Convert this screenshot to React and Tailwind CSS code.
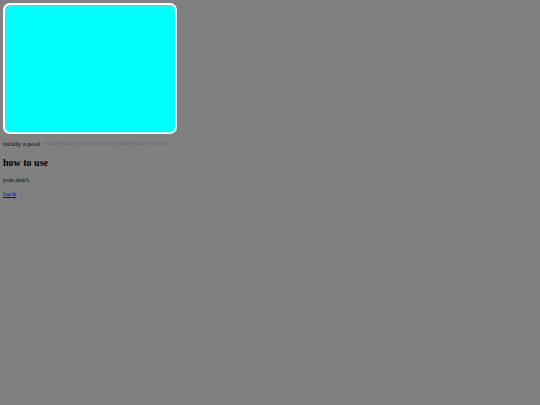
export default function App() {
  return (
    <div className="min-h-[405px] bg-[#808080] p-[3px] text-[7px] leading-[1.15] text-black font-['Liberation_Serif',serif]">
      <div className="w-[174px] h-[131px] rounded-[7px] border-[2px] border-white bg-[#00ffff]" />
      <p className="mt-[6px]">
        totally a pool <span className="text-[#555]">{"^".repeat(39)}</span>
      </p>
      <h2 className="mt-[9px] text-[10px] font-bold">how to use</h2>
      <p className="mt-[7px]">you don't.</p>
      <p className="mt-[6px]">
        <a href="#" className="text-[#0000ee] underline">back</a>
      </p>
    </div>
  );
}
